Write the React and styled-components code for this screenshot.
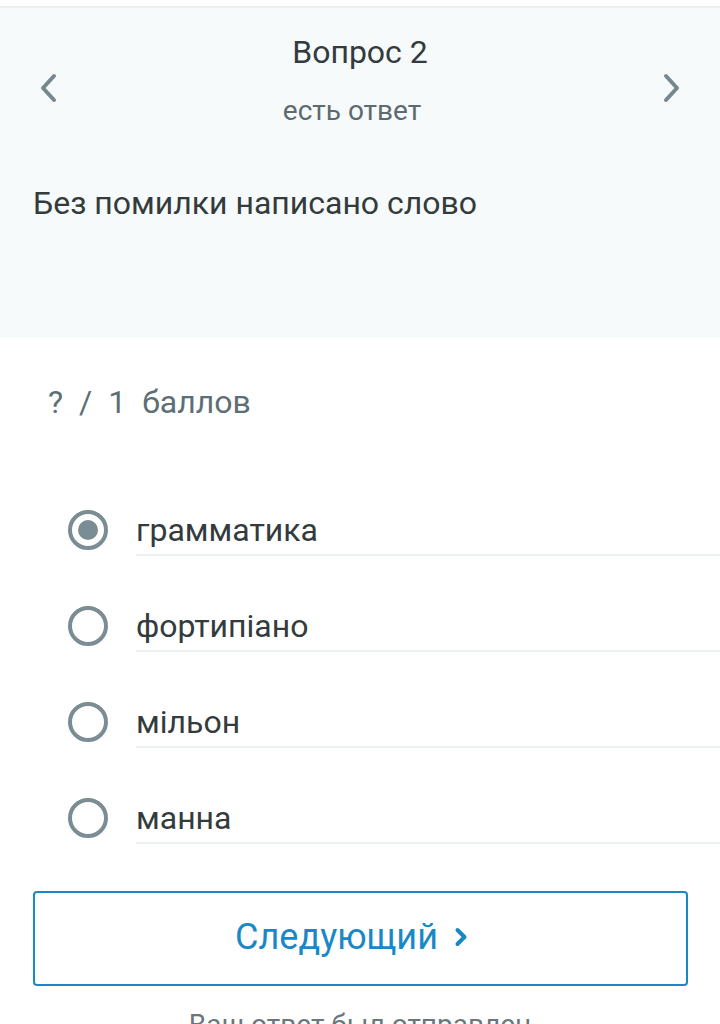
import React from 'react'
import styled, { createGlobalStyle } from 'styled-components'

const GlobalStyle = createGlobalStyle`
  html, body {
    margin: 0;
    padding: 0;
    background: #ffffff;
  }
  body {
    font-family: Roboto, "Noto Sans", "Liberation Sans", sans-serif;
    overflow: hidden;
  }
`

const Page = styled.div`
  width: 720px;
  height: 1024px;
  overflow: hidden;
  padding-top: 6px;
  box-sizing: border-box;
`

const Header = styled.section`
  background: #f6fafa;
  border-top: 2px solid #ebefef;
  height: 332px;
  box-sizing: border-box;
  padding: 0 33px;
`

const NavRow = styled.div`
  display: flex;
  align-items: flex-start;
  justify-content: space-between;
  height: 132px;
  margin: 0 -8px;
`

const NavButton = styled.button`
  width: 46px;
  height: 46px;
  border: none;
  background: none;
  padding: 0;
  margin-top: 57px;
  display: flex;
  align-items: center;
  justify-content: center;
  color: #76878d;
`

const TitleBlock = styled.div`
  display: flex;
  flex-direction: column;
  align-items: center;
  padding-top: 14px;
`

const Title = styled.h1`
  margin: 0;
  font-size: 32px;
  font-weight: 400;
  color: #333b3d;
  line-height: 60px;
`

const Status = styled.div`
  font-size: 28px;
  color: #5d6a6e;
  line-height: 58px;
  margin-right: 16px;
`

const Question = styled.p`
  margin: 43px 0 0;
  font-size: 32px;
  color: #333b3d;
  line-height: 40px;
`

const Body = styled.main`
  padding: 0 33px;
`

const Score = styled.div`
  margin-top: 44px;
  padding-left: 15px;
  font-size: 32px;
  color: #5d6f76;
  word-spacing: 8px;
  line-height: 40px;
`

const Options = styled.ul`
  list-style: none;
  margin: 60px -33px 0 0;
  padding: 0 0 0 35px;
`

const Option = styled.li`
  display: flex;
  align-items: center;
  height: 96px;
`

const Radio = styled.span`
  flex: none;
  width: 40px;
  height: 40px;
  box-sizing: border-box;
  border-radius: 50%;
  border: 4px solid #7a8d94;
  display: flex;
  align-items: center;
  justify-content: center;
  margin-right: 28px;
  &::after {
    content: '';
    width: 20px;
    height: 20px;
    border-radius: 50%;
    background: ${p => (p.$checked ? '#7a8d94' : 'transparent')};
  }
`

const Label = styled.span`
  flex: 1;
  height: 48px;
  line-height: 48px;
  font-size: 32px;
  color: #333b3d;
  border-bottom: 2px solid #eef1f1;
  transform: translateY(1px);
`

const NextButton = styled.button`
  display: flex;
  align-items: center;
  justify-content: center;
  gap: 16px;
  width: 655px;
  height: 95px;
  margin-top: 25px;
  background: #ffffff;
  border: 2px solid #1a88c4;
  border-radius: 4px;
  color: #1a88c6;
  font-family: inherit;
  font-size: 36px;
  padding: 0 18px 4px 0;
`

const Sent = styled.div`
  text-align: center;
  margin-top: 22px;
  font-size: 28px;
  line-height: 34px;
  color: #6b777b;
`

const NavChevron = ({ dir }) => (
  <svg width="20" height="30" viewBox="0 0 20 30" fill="none">
    <path
      d={dir === 'left' ? 'M16 3 L5 15 L16 27' : 'M4 3 L15 15 L4 27'}
      stroke="currentColor"
      strokeWidth="4"
      strokeLinecap="round"
      strokeLinejoin="round"
    />
  </svg>
)

const SmallChevron = () => (
  <svg width="14" height="22" viewBox="0 0 14 22" fill="none">
    <path
      d="M3.5 4 L10.5 11 L3.5 18"
      stroke="currentColor"
      strokeWidth="4"
      strokeLinecap="round"
      strokeLinejoin="round"
    />
  </svg>
)

const options = [
  { text: 'грамматика', checked: true },
  { text: 'фортипіано' },
  { text: 'мільон' },
  { text: 'манна' }
]

export default function App() {
  return (
    <Page>
      <GlobalStyle />
      <Header>
        <NavRow>
          <NavButton aria-label="Назад">
            <NavChevron dir="left" />
          </NavButton>
          <TitleBlock>
            <Title>Вопрос 2</Title>
            <Status>есть ответ</Status>
          </TitleBlock>
          <NavButton aria-label="Вперед">
            <NavChevron dir="right" />
          </NavButton>
        </NavRow>
        <Question>Без помилки написано слово</Question>
      </Header>
      <Body>
        <Score>?&nbsp;/&nbsp;1&nbsp;баллов</Score>
        <Options>
          {options.map(o => (
            <Option key={o.text}>
              <Radio $checked={o.checked} />
              <Label>{o.text}</Label>
            </Option>
          ))}
        </Options>
        <NextButton>
          Следующий
          <SmallChevron />
        </NextButton>
        <Sent>Ваш ответ был отправлен</Sent>
      </Body>
    </Page>
  )
}
